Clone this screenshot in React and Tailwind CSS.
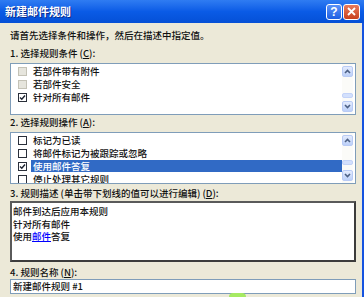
import React from "react";

function Chevron({ up }) {
  return (
    <svg width="7" height="5" viewBox="0 0 7 5">
      <path
        d={up ? "M1 4 L3.5 1.5 L6 4" : "M1 1 L3.5 3.5 L6 1"}
        fill="none"
        stroke="#4d6185"
        strokeWidth="1.6"
      />
    </svg>
  );
}

function ScrollBar({ gap }) {
  return (
    <div className="w-[11px] flex flex-col py-[2px] mr-[2px] bg-[#fbfbf8]">
      <div className="h-[11px] flex items-center justify-center rounded-[2px] border border-[#b9cbf5] bg-gradient-to-b from-[#e3ebfd] to-[#bcd0f8]">
        <Chevron up />
      </div>
      <div className={`flex-1 flex flex-col justify-end ${gap}`}>
        <div className="h-[5px] rounded-[2px] border border-[#c3d3f8] bg-[#d3e0fc]" />
      </div>
      <div className="h-[11px] flex items-center justify-center rounded-[2px] border border-[#b9cbf5] bg-gradient-to-b from-[#e3ebfd] to-[#bcd0f8]">
        <Chevron />
      </div>
    </div>
  );
}

function Check({ checked, disabled }) {
  return (
    <div
      className={`w-[9px] h-[9px] border flex items-center justify-center shrink-0 ${
        disabled ? "border-[#c4c2b6] bg-[#e6e5dd]" : "border-[#2a2f3a] bg-white"
      }`}
    >
      {checked && (
        <svg width="7" height="7" viewBox="0 0 7 7">
          <path d="M1 3.5 L2.8 5.3 L6 1.5" fill="none" stroke="#1c2230" strokeWidth="1.4" />
        </svg>
      )}
    </div>
  );
}

function Row({ text, checked, disabled, selected }) {
  return (
    <div className="h-[13px] flex items-center pl-[7px]">
      <Check checked={checked} disabled={disabled} />
      <span
        className={`ml-[4px] h-[12px] flex items-center px-[2px] ${
          selected ? "flex-1 bg-[#316ac5] text-white" : ""
        }`}
      >
        {text}
      </span>
    </div>
  );
}

function ListBox({ rows, gap, top }) {
  return (
    <div className="h-[52px] flex border border-[#7f9db9] bg-white">
      <div className={`flex-1 overflow-hidden ${top}`}>
        {rows.map((r) => (
          <Row key={r.text} {...r} />
        ))}
      </div>
      <ScrollBar gap={gap} />
    </div>
  );
}

export default function App() {
  return (
    <div className="relative w-[364px] h-[297px] overflow-hidden bg-[#ece9d8] text-[#111] font-medium font-['Noto_Sans_CJK_SC',sans-serif] text-[9.5px] leading-[12.5px]">
      <div className="h-[23px] flex items-center justify-between pl-[5px] pr-[4px] bg-gradient-to-b from-[#2f7cf2] via-[#0a5be6] to-[#0550d6]">
        <span className="text-white font-bold text-[11px] [text-shadow:1px_1px_0_#0b2b8c]">
          新建邮件规则
        </span>
        <div className="flex gap-[1px]">
          <div className="w-[16px] h-[16px] rounded-[3px] border border-white bg-gradient-to-b from-[#5b92f8] to-[#1d5ee2] flex items-center justify-center text-white font-bold text-[12px] leading-none font-['Liberation_Sans',sans-serif]">
            ?
          </div>
          <div className="w-[17px] h-[16px] rounded-[3px] border border-white bg-gradient-to-b from-[#e8795a] to-[#c8401c] flex items-center justify-center">
            <svg width="9" height="9" viewBox="0 0 9 9">
              <path d="M1 1 L8 8 M8 1 L1 8" stroke="white" strokeWidth="1.8" />
            </svg>
          </div>
        </div>
      </div>

      <div className="h-[274px] flex flex-col pl-[10px] pr-[6px] border-r-2 border-[#1553e0]">
        <p className="mt-[6px]">请首先选择条件和操作，然后在描述中指定值。</p>
        <p className="mt-[5px]">
          1. 选择规则条件 (<span className="underline">C</span>):
        </p>
        <div className="mt-[4px]">
          <ListBox
            top="pt-[1px]"
            gap="pb-[3px]"
            rows={[
              { text: "若部件带有附件", disabled: true },
              { text: "若部件安全", disabled: true },
              { text: "针对所有邮件", checked: true },
            ]}
          />
        </div>
        <p className="mt-[1px]">
          2. 选择规则操作 (<span className="underline">A</span>):
        </p>
        <div className="mt-[3px]">
          <ListBox
            top="pt-[1px]"
            gap="pb-[5px]"
            rows={[
              { text: "标记为已读" },
              { text: "将邮件标记为被跟踪或忽略" },
              { text: "使用邮件答复", checked: true, selected: true },
              { text: "停止处理其它规则" },
            ]}
          />
        </div>
        <p className="mt-[3px]">
          3. 规则描述 (单击带下划线的值可以进行编辑) (<span className="underline">D</span>):
        </p>
        <div className="mt-[2px] h-[61px] border-2 border-t-[#5a5a5a] border-l-[#5a5a5a] border-r-[#3c3c3c] border-b-[#3c3c3c] bg-white pl-[1px] pt-[2px]">
          <p>邮件到达后应用本规则</p>
          <p>针对所有邮件</p>
          <p>
            使用<span className="text-[#0000ff] underline">邮件</span>答复
          </p>
        </div>
        <p className="mt-[4px]">
          4. 规则名称 (<span className="underline">N</span>):
        </p>
        <div className="h-[15px] border border-[#7f9db9] bg-white flex items-center pl-[2px]">
          新建邮件规则 #1
        </div>
      </div>

      <div className="absolute left-[229px] top-[293px] w-[17px] h-[8px] rounded-full bg-[#a6ea62]" />
    </div>
  );
}
